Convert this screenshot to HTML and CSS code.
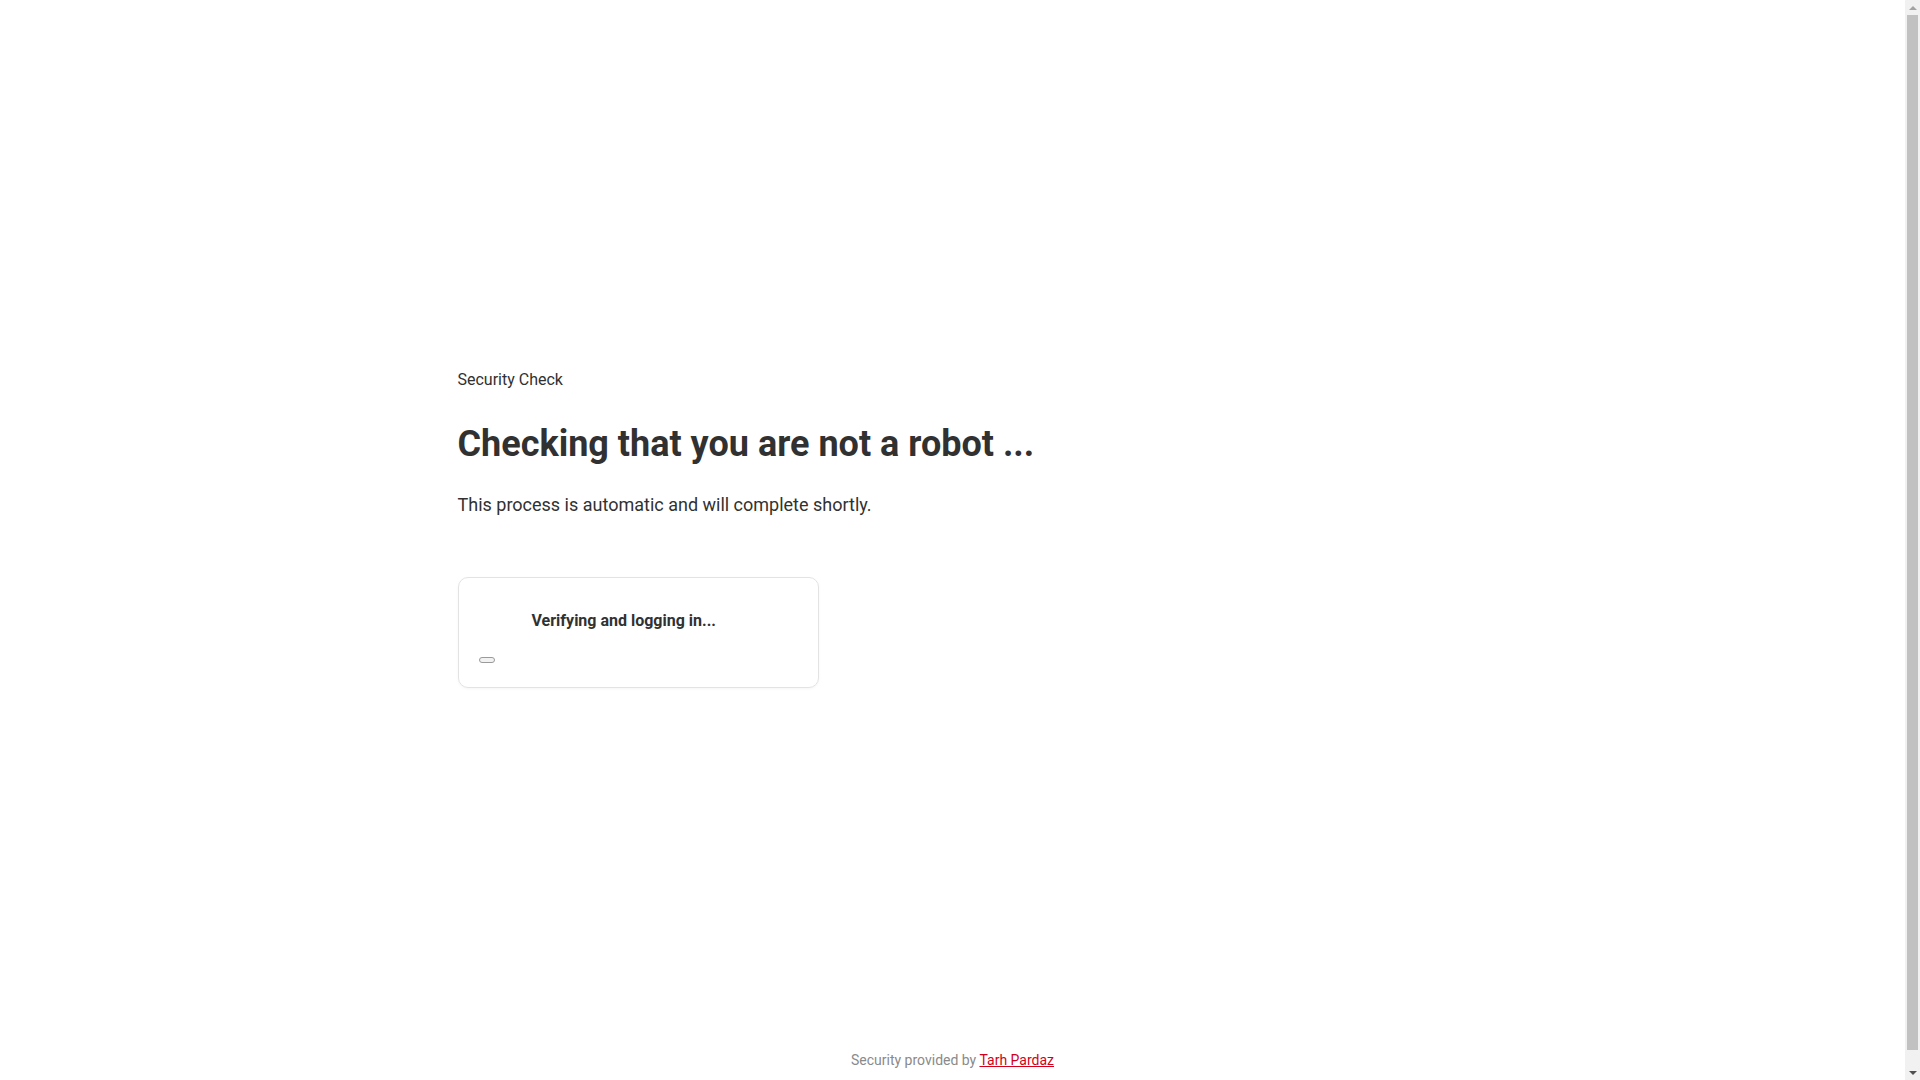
FILE: index.html
```html
<!DOCTYPE html>
<html lang="en">
<head>
<meta charset="utf-8">
<title>Security Check</title>
<link rel="stylesheet" href="styles.css">
</head>
<body>
<div class="page">
  <main class="main">
    <div class="site-name">Security Check</div>
    <h1 class="heading">Checking that you are not a robot ...</h1>
    <p class="lead">This process is automatic and will complete shortly.</p>
    <div class="card">
      <div class="card-title">Verifying and logging in...</div>
      <div class="pill"></div>
    </div>
  </main>
  <footer class="footer">
    Security provided by <a class="footer-link" href="#">Tarh Pardaz</a>
  </footer>
</div>
<div class="scrollbar" aria-hidden="true">
  <div class="sb-arrow sb-up"></div>
  <div class="sb-track"><div class="sb-thumb"></div></div>
  <div class="sb-arrow sb-down"></div>
</div>
</body>
</html>
```

FILE: styles.css
```css
html, body {
  margin: 0;
  padding: 0;
  background: #ffffff;
}
body {
  font-family: Roboto, "Liberation Sans", Arial, sans-serif;
  color: #313131;
}
.page {
  width: calc(100% - 15px);
  min-height: calc(100vh + 15px);
  display: flex;
  flex-direction: column;
}
.main {
  flex: 1;
  width: 990px;
  margin: 0 auto;
  padding-top: 368px;
  box-sizing: border-box;
}
.site-name {
  font-size: 16px;
  line-height: 24px;
  color: #313131;
}
.heading {
  margin: 30px 0 0 0;
  font-size: 36px;
  line-height: 45px;
  font-weight: 700;
  color: #313131;
}
.lead {
  margin: 24px 0 0 0;
  font-size: 18px;
  line-height: 27px;
  color: #313131;
}
.card {
  margin-top: 59px;
  width: 361px;
  box-sizing: border-box;
  border: 1px solid #e3e3e3;
  border-radius: 10px;
  box-shadow: 0 1px 3px rgba(0, 0, 0, 0.04);
  padding: 33px 20px 24px 20px;
}
.card-title {
  margin-left: 53px;
  font-size: 16px;
  line-height: 20px;
  font-weight: 700;
  color: #313131;
}
.pill {
  margin-top: 26px;
  width: 14px;
  height: 4px;
  border: 1px solid #9a9a9a;
  border-radius: 3px;
  background: #f2f2f2;
}
.footer {
  text-align: center;
  font-size: 14px;
  line-height: 20px;
  color: #8a8a8a;
  padding: 0 0 25px 0;
}
.footer-link {
  color: #d3001b;
  text-decoration: underline;
}
.scrollbar {
  position: fixed;
  top: 0;
  right: 0;
  width: 15px;
  height: 100vh;
  background: #f1f1f1;
  display: flex;
  flex-direction: column;
}
.sb-arrow {
  height: 15px;
  flex: none;
  display: flex;
  align-items: center;
  justify-content: center;
}
.sb-up::before {
  content: "";
  border-left: 4px solid transparent;
  border-right: 4px solid transparent;
  border-bottom: 4px solid #a3a3a3;
}
.sb-down::before {
  content: "";
  border-left: 4px solid transparent;
  border-right: 4px solid transparent;
  border-top: 4px solid #505050;
}
.sb-track {
  flex: 1;
  padding: 0 2px;
}
.sb-thumb {
  height: calc(100% - 15px);
  background: #c1c1c1;
}
```
